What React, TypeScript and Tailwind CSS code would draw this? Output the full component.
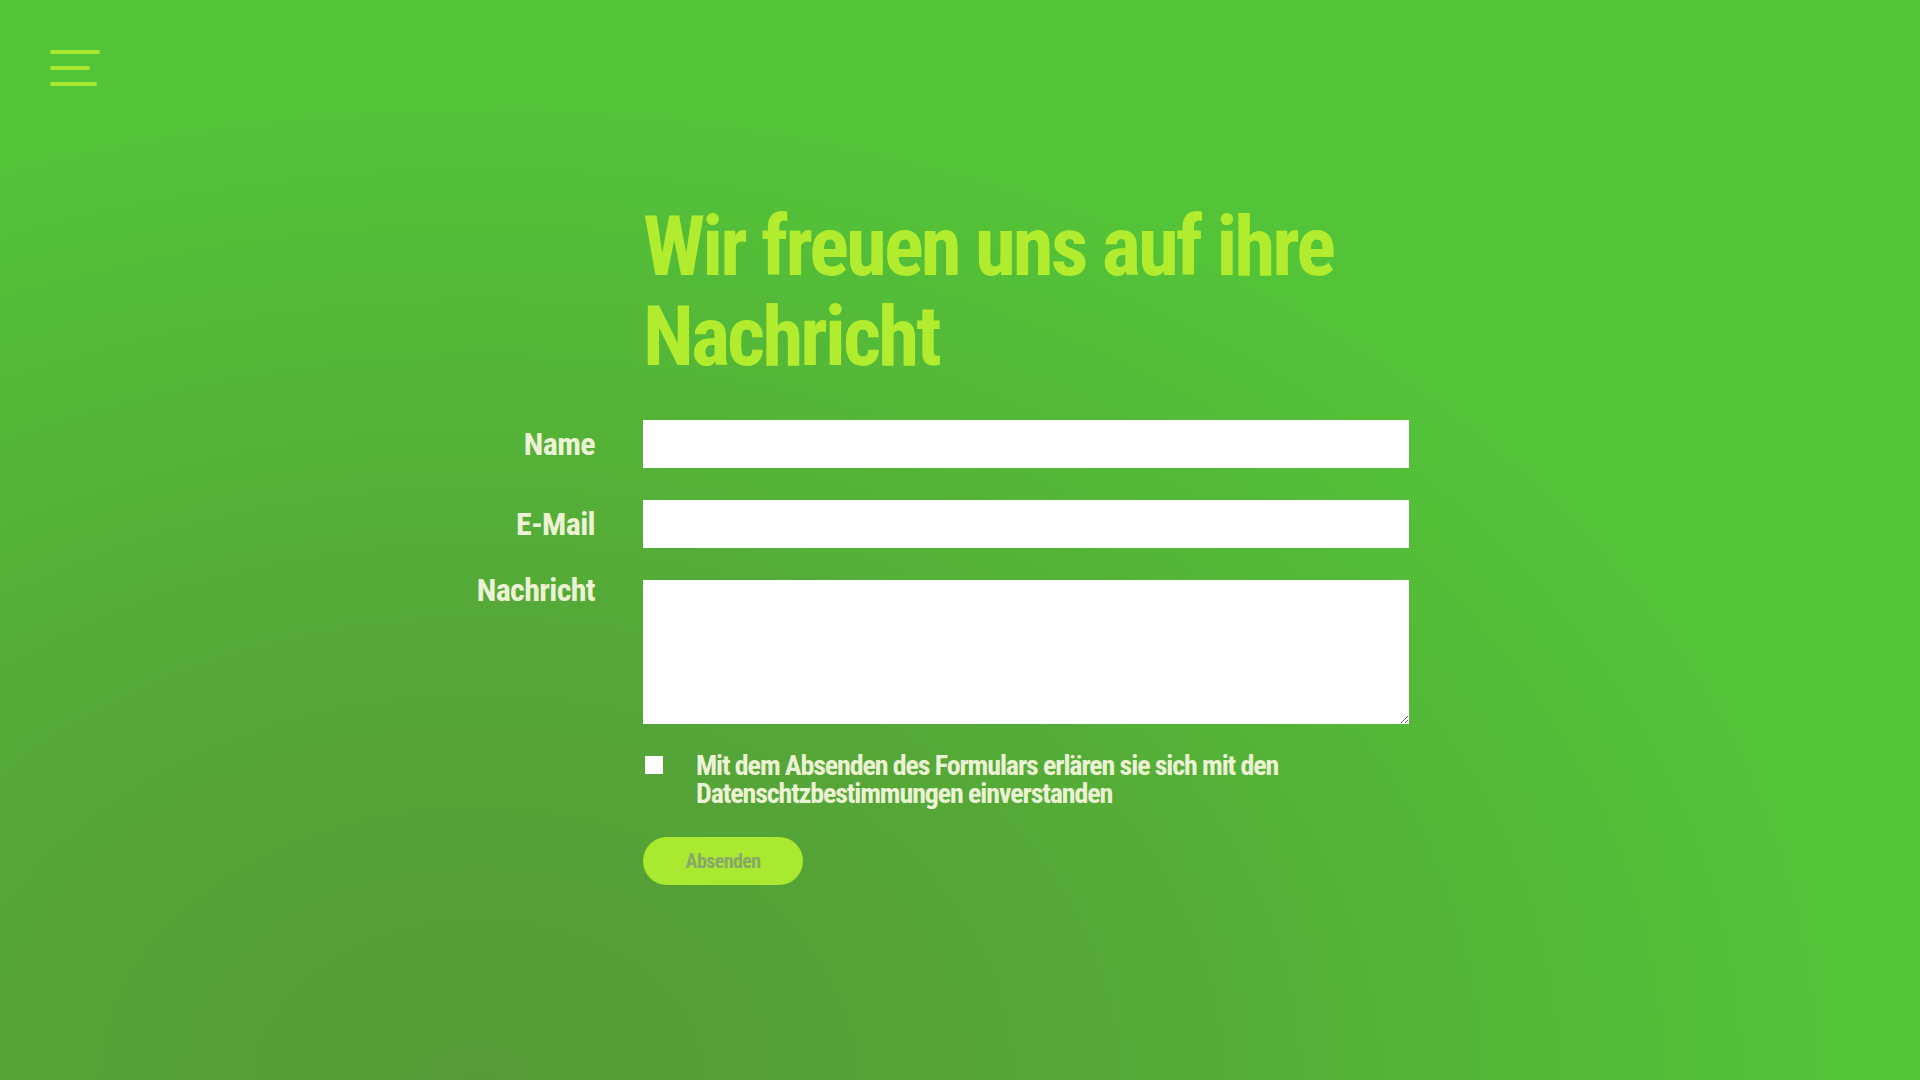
export default function App() {
  return (
    <div className="min-h-screen w-full font-['Roboto_Condensed','Open_Sans_Condensed','Roboto',sans-serif] font-stretch-condensed font-bold bg-[radial-gradient(ellipse_70%_90%_at_25%_100%,#569b37_0%,#55a537_40%,#53c338_100%)]">
      {/* Menu button */}
      <div className="h-[86px] pt-[50px] pl-[50px]">
        <button className="flex flex-col gap-[12px]">
          <span className="block h-[4px] w-[50px] rounded-full bg-[#a9e832]" />
          <span className="block h-[4px] w-[40px] rounded-full bg-[#a9e832]" />
          <span className="block h-[4px] w-[47px] rounded-full bg-[#a9e832]" />
        </button>
      </div>

      {/* Contact form */}
      <form className="ml-[395px] mt-[116px] grid grid-cols-[200px_766px] gap-x-12 pb-[196px]">
        <h1 className="col-start-2 mb-[38px] text-[83px] leading-[90px] tracking-[-0.035em] text-[#b1ec2f]">
          Wir freuen uns auf ihre Nachricht
        </h1>

        {/* Name */}
        <label className="text-right text-[32px] leading-[48px] tracking-[-0.02em] text-[#ecf3d5]">
          Name
        </label>
        <input type="text" className="h-12 w-full bg-white outline-none" />

        {/* E-Mail */}
        <label className="mt-8 text-right text-[32px] leading-[48px] tracking-[-0.02em] text-[#ecf3d5]">
          E-Mail
        </label>
        <input type="email" className="mt-8 h-12 w-full bg-white outline-none" />

        {/* Nachricht */}
        <label className="mt-[18px] text-right text-[32px] leading-[48px] tracking-[-0.02em] text-[#ecf3d5]">
          Nachricht
        </label>
        <textarea className="mt-8 h-[144px] w-full bg-white outline-none" />

        {/* Consent */}
        <div className="col-start-2 mt-[28px] flex items-start gap-[33px] pl-[2px]">
          <input
            type="checkbox"
            className="mt-[4px] h-[18px] w-[18px] shrink-0 appearance-none bg-white"
          />
          <p className="max-w-[600px] text-[28px] leading-[28px] tracking-[-0.04em] text-[#ecf3d5]">
            Mit dem Absenden des Formulars erlären sie sich mit den Datenschtzbestimmungen einverstanden
          </p>
        </div>

        {/* Submit */}
        <div className="col-start-2 mt-[29px]">
          <button
            type="submit"
            className="h-12 w-[160px] rounded-full bg-[#a9e92f] text-[20px] tracking-[-0.03em] text-[#86a96a]"
          >
            Absenden
          </button>
        </div>
      </form>
    </div>
  );
}
